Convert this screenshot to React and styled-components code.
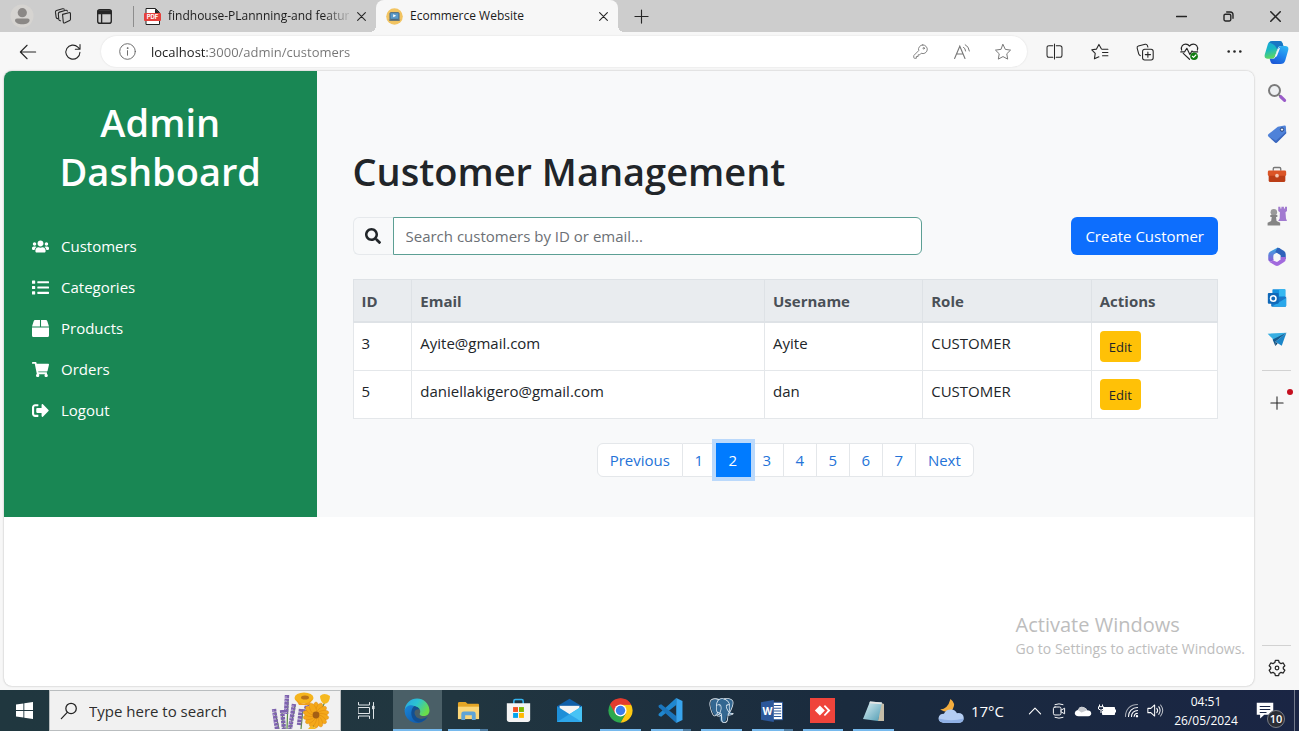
import React from 'react';
import styled, { createGlobalStyle, css } from 'styled-components';
import { FaUsers, FaList, FaBox, FaShoppingCart, FaSignOutAlt, FaSearch } from 'react-icons/fa';
import { SiPostgresql } from 'react-icons/si';

const GlobalStyle = createGlobalStyle`
  *, *::before, *::after { box-sizing: border-box; }
  body {
    margin: 0;
    font-family: "Open Sans", "Noto Sans", sans-serif;
    font-size: 15px;
    color: #212529;
    background: #f7f7f7;
  }
  button, input { font: inherit; color: inherit; }
  button { padding: 0; border: 0; background: none; cursor: pointer; }
  svg { display: block; flex: none; }
`;

/* ---------- browser chrome ---------- */

const Desktop = styled.div`
  display: flex;
  flex-direction: column;
  min-height: 100vh;
`;

const TabStrip = styled.div`
  display: flex;
  height: 32px;
  background: #cdcdcd;
  color: #1b1b1b;
`;

const StripTools = styled.div`
  display: flex;
  align-items: center;
  width: 134px;
  padding-left: 10px;
  gap: 17px;
  border-right: 1px solid #8d8d8d;
  border-image: linear-gradient(transparent 7px, #8d8d8d 7px, #8d8d8d 26px, transparent 26px) 1;
`;

const IconButton = styled.button`
  display: grid;
  place-items: center;
  width: ${(p) => p.$w || 24}px;
  height: ${(p) => p.$h || 24}px;
  color: ${(p) => p.$color || '#262626'};
`;

const Tab = styled.div`
  position: relative;
  display: flex;
  align-items: center;
  width: 242px;
  padding: 0 10px;
  gap: 7px;
  font-size: 12px;
  border-radius: 8px 8px 0 0;
  ${(p) => p.$active && css`
    background: #f7f7f7;
    &::before, &::after {
      content: "";
      position: absolute;
      bottom: 0;
      width: 6px;
      height: 6px;
    }
    &::before { left: -6px; background: radial-gradient(circle at 0 0, transparent 6px, #f7f7f7 6px); }
    &::after { right: -6px; background: radial-gradient(circle at 100% 0, transparent 6px, #f7f7f7 6px); }
  `}
`;

const TabTitle = styled.button`
  flex: 1;
  min-width: 0;
  white-space: nowrap;
  text-align: left;
  line-height: 20px;
  ${(p) => p.$fade && css`
    color: transparent;
    background: linear-gradient(90deg, #1b1b1b 155px, #b4b4b4 100%);
    background-clip: text;
  `}
`;

const WindowControls = styled.div`
  display: flex;
  margin-left: auto;
`;

const Toolbar = styled.div`
  display: flex;
  align-items: center;
  height: 39px;
  padding: 0 3px 0 5px;
`;

const AddressBar = styled.div`
  display: flex;
  flex: 1;
  align-items: center;
  height: 31px;
  margin: 0 5px 0 6px;
  padding: 0 4px 0 16px;
  border-radius: 16px;
  background: #fff;
  box-shadow: 0 0 2px rgba(0, 0, 0, 0.12);
`;

const AddressInput = styled.input`
  flex: 1;
  min-width: 0;
  height: 24px;
  margin-left: 14px;
  padding: 0;
  border: 0;
  outline: 0;
  font-size: 13px;
  color: transparent;
  background: linear-gradient(90deg, #1b1b1b 56px, #747474 56px);
  background-clip: text;
`;

const Body = styled.div`
  display: flex;
  flex: 1;
`;

const PageFrame = styled.main`
  position: relative;
  flex: 1;
  min-width: 0;
  margin: 0 0 4px 4px;
  overflow: hidden;
  border-radius: 8px;
  background: #fff;
  box-shadow: 0 0 2px rgba(0, 0, 0, 0.3);
`;

const Rail = styled.aside`
  display: flex;
  flex-direction: column;
  align-items: center;
  width: 45px;
  padding: 1px 0 2px;
`;

const RailLine = styled.hr`
  width: 29px;
  height: 1px;
  margin: ${(p) => (p.$end ? 'auto 0 1px' : '11px 0 11px')};
  border: 0;
  background: #d2d2d2;
`;

const AddApp = styled.div`
  position: relative;
  &::after {
    content: "";
    position: absolute;
    top: 7px;
    right: 6px;
    width: 6px;
    height: 6px;
    border-radius: 50%;
    background: #c50f1f;
  }
`;

/* ---------- admin page ---------- */

const Admin = styled.div`
  display: grid;
  grid-template-columns: 1fr 3fr;
`;

const Sidebar = styled.nav`
  padding: 27px 28px 40px;
  background: #198754;
  color: #fff;
`;

const Brand = styled.h2`
  margin: 0 0 29px;
  font-size: 38px;
  font-weight: 600;
  line-height: 49px;
  text-align: center;
`;

const NavList = styled.ul`
  margin: 0;
  padding: 0;
  list-style: none;
`;

const NavLink = styled.a`
  display: flex;
  align-items: center;
  gap: 12px;
  height: 41px;
  color: inherit;
  line-height: 24px;
  text-decoration: none;
  svg { margin-top: 2px; }
`;

const Content = styled.section`
  min-width: 0;
  padding: 76px 36px 40px;
  background: #f8f9fa;
`;

const Title = styled.h1`
  margin: 0 0 21px;
  font-size: 38px;
  font-weight: 600;
  line-height: 49px;
`;

const Actions = styled.div`
  display: grid;
  grid-template-columns: repeat(3, 1fr);
  column-gap: 23px;
  margin-bottom: 24px;
`;

const SearchGroup = styled.label`
  display: flex;
  grid-column: span 2;
  height: 38px;
`;

const SearchIcon = styled.span`
  display: grid;
  place-items: center;
  width: 40px;
  border: 1px solid #e6e9ec;
  border-right: 0;
  border-radius: 6px 0 0 6px;
`;

const SearchInput = styled.input`
  flex: 1;
  min-width: 0;
  padding: 0 12px;
  border: 1px solid #5c9f94;
  border-radius: 0 6px 6px 0;
  outline: 0;
  background: #fff;
  &::placeholder { color: #6c7075; opacity: 1; }
`;

const CreateButton = styled.button`
  justify-self: end;
  height: 38px;
  padding: 0 14px;
  border-radius: 6px;
  background: #0d6efd;
  color: #fff;
`;

const Table = styled.table`
  width: 100%;
  table-layout: fixed;
  border-collapse: collapse;
  background: #fff;
  line-height: 24px;
`;

const Th = styled.th`
  width: ${(p) => p.$w};
  padding: 9px 8px 8px;
  border: 1px solid #dee2e6;
  border-bottom: 2px solid #dee2e6;
  background: #e9ecef;
  color: #495057;
  font-weight: 700;
  text-align: left;
`;

const Td = styled.td`
  padding: 8px;
  border: 1px solid #e4e7ea;
  vertical-align: top;
`;

const EditButton = styled.button`
  display: block;
  height: 31px;
  padding: 0 9px;
  border-radius: 4px;
  background: #ffc107;
  color: #212529;
  font-size: 13px;
`;

const Pages = styled.ul`
  display: flex;
  justify-content: center;
  margin: 24px 0 0;
  padding: 0;
  list-style: none;
`;

const PageLink = styled.button`
  width: ${(p) => (p.$first || p.$last ? 'auto' : p.$active ? '35px' : '33px')};
  height: 34px;
  padding: 0 ${(p) => (p.$first || p.$last ? 12 : 0)}px;
  border: 1px solid #e4e7ea;
  border-left-width: ${(p) => (p.$first ? 1 : 0)}px;
  border-radius: ${(p) => (p.$first ? '6px 0 0 6px' : p.$last ? '0 6px 6px 0' : '0')};
  background: #fff;
  color: #2473d8;
  ${(p) => p.$active && css`
    position: relative;
    border-color: #007bff;
    background: #007bff;
    color: #fff;
    box-shadow: 0 0 0 4px #bbd9fb;
  `}
`;

const Watermark = styled.div`
  position: absolute;
  right: 9px;
  bottom: 26px;
  color: #bdbdbd;
  font-size: 14px;
  line-height: 22px;
  strong {
    display: block;
    font-size: 20px;
    font-weight: 400;
    line-height: 26px;
  }
`;

/* ---------- taskbar ---------- */

const Taskbar = styled.footer`
  display: flex;
  height: 41px;
  background: linear-gradient(90deg, #20373f, #213640 35%, #1a2b3e 65%, #1a2544);
  color: #fff;
`;

const TaskSearch = styled.label`
  display: flex;
  align-items: center;
  width: 292px;
  padding-left: 10px;
  border: 1px solid #b9bdbf;
  background: #f1f1f1;
  color: #222;
  input {
    flex: 1;
    min-width: 0;
    margin-left: 11px;
    padding: 0;
    border: 0;
    outline: 0;
    background: none;
  }
  input::placeholder { color: #2e2e2e; opacity: 1; }
`;

const AppList = styled.div`
  display: flex;
  width: 507px;
`;

const AppButton = styled.button`
  position: relative;
  display: grid;
  flex: 1;
  place-items: center;
  ${(p) => p.$active && css`background: linear-gradient(90deg, transparent 1px, #4a5f67 1px, #4a5f67 50px, transparent 50px);`}
  ${(p) => p.$running && css`
    &::after {
      content: "";
      position: absolute;
      bottom: 0;
      left: ${p.$active ? 1 : 5}px;
      right: ${p.$active ? 1 : 5}px;
      height: 2px;
      background: ${p.$many ? 'linear-gradient(90deg, #76b9ed 32px, #4d7ba0 32px)' : '#76b9ed'};
    }
  `}
`;

const Tray = styled.div`
  display: flex;
  align-items: center;
  margin-left: auto;
`;

const Weather = styled.button`
  display: flex;
  align-items: center;
  gap: 7px;
  margin-right: 19px;
`;

const Clock = styled.time`
  width: 76px;
  margin-left: 1px;
  font-size: 12px;
  line-height: 19px;
  text-align: center;
`;

const Notifications = styled.button`
  position: relative;
  width: 30px;
  height: 30px;
  margin: 0 8px 0 12px;
  span {
    position: absolute;
    right: 1px;
    bottom: -2px;
    width: 18px;
    height: 18px;
    border: 1px solid #7b7f88;
    border-radius: 50%;
    background: #2b2d35;
    font-size: 11px;
    font-weight: 600;
    line-height: 16px;
    text-align: center;
  }
`;

const DesktopEdge = styled.div`
  align-self: stretch;
  width: 5px;
  border-left: 1px solid #72798b;
`;

/* ---------- drawings ---------- */

const Line = ({ size = 18, box = 20, sw = 1.2, children }) => (
  <svg width={size} height={size} viewBox={`0 0 ${box} ${box}`} fill="none" stroke="currentColor"
    strokeWidth={sw} strokeLinecap="round" strokeLinejoin="round" aria-hidden="true">{children}</svg>
);
const Art = ({ size = 20, box = 24, children }) => (
  <svg width={size} height={size} viewBox={`0 0 ${box} ${box}`} aria-hidden="true">{children}</svg>
);

const Profile = () => (
  <Art size={24}>
    <circle cx="12" cy="12" r="11.5" fill="#d6d4d1" />
    <circle cx="12.3" cy="8.7" r="4.6" fill="#8b8886" />
    <path d="M5 16.2Q5 14.4 7 14.4H17.6Q19.6 14.4 19.6 16.2C19.6 18.6 16.4 20.3 12.3 20.3S5 18.6 5 16.2Z" fill="#8b8886" />
  </Art>
);
const Workspaces = () => (
  <Line size={18}>
    <path d="M9.5 8.2l7-1.9q1.7-.4 1.8 1.2v6.1q0 1-.9 1.4l-5.2 2.6q-1.700.8-1.9-1L9.500 8.2z" />
    <path d="M7.3 15.3q-1.7.1-2-1.4L4.8 7.5q0-1.4 1.3-1.8l7-2q1.4-.3 1.8.9" />
    <path d="M4.4 12.9q-1.8.1-2-1.3L1.6 5.7Q1.5 4.3 2.8 3.9L9.5 2q1.5-.3 1.9.6" />
  </Line>
);
const TabActions = () => (
  <Line size={17} sw={1.6}>
    <rect x="2" y="2" width="16" height="16" rx="2.5" /><path d="M2.5 3.5H17.5V6.5H2.5Z" fill="currentColor" /><path d="M6.6 7v10.5" />
  </Line>
);
const PdfIcon = () => (
  <Art size={17} box={17}>
    <path d="M2 .5h9.5L15.5 4.5V16.5H2Z" fill="#fff" stroke="#222" strokeWidth="1" /><path d="M11 .5V5h4.5z" fill="#222" />
    <rect x="0" y="5" width="17" height="8" rx="1" fill="#e5403b" />
    <text x="8.5" y="11.4" fontFamily="Inter, sans-serif" fontSize="6" fontWeight="700" fill="#fff" textAnchor="middle">PDF</text>
  </Art>
);
const Favicon = () => (
  <Art size={17} box={17}>
    <circle cx="8.5" cy="8.5" r="8.3" fill="#f2c462" /><rect x="4" y="4.7" width="9" height="6.6" rx=".6" fill="#5b9bc9" stroke="#3f6586" />
    <path d="M7.2 6.2l3 1.5-3 1.5z" fill="#fff" /><path d="M2.7 11.6h11.6l-.8 1.2h-10z" fill="#42617c" />
  </Art>
);
const Cross = ({ size = 9, sw = 1.2 }) => <Line size={size} box={10} sw={sw}><path d="M.7.7l8.6 8.6M9.3.7L.7 9.3" /></Line>;
const Plus = ({ size = 15 }) => <Line size={size} box={16} sw={1.2}><path d="M8 1v14M1 8h14" /></Line>;
const Minimise = () => <Line size={11} box={10} sw={1.3}><path d="M.5 5h9" /></Line>;
const Restore = () => <Line size={11} box={11} sw={1.4}><rect x="1" y="3.2" width="6.8" height="6.8" rx="1.4" /><path d="M3.7 1H7.2Q10 1 10 3.8V7.3" /></Line>;
const Back = () => <Line size={18}><path d="M18.5 10H1.7M9 2.5L1.5 10 9 17.5" /></Line>;
const Reload = () => <Line size={18}><path d="M17.7 10.2A7.8 7.8 0 1 1 15.4 4.6L17.6 6.8M17.8 1.8V7h-5.2" /></Line>;
const Info = () => <Line size={17} sw={1.1}><circle cx="10" cy="10" r="9.2" /><path d="M10 9v5.4" /><circle cx="10" cy="6" r=".5" fill="currentColor" /></Line>;
const Key = () => (
  <Line size={15} sw={1.2}>
    <path d="M13 1.2A5.8 5.8 0 0 0 7.6 8.8L1.4 15Q1 15.5 1 16v2Q1 19 2 19H4.5V16.7H6.8V14.4H9l1.9-2.1A5.8 5.8 0 1 0 13 1.2Z" /><circle cx="14.3" cy="5.7" r="1" />
  </Line>
);
const ReadAloud = () => (
  <svg width="18" height="18" viewBox="0 0 18 18" fill="none" stroke="currentColor" strokeLinecap="round" aria-hidden="true">
    <path d="M1.6 15.5L6.8 3.2 12 15.5M3.6 11H10" strokeWidth="1.1" /><path d="M10.5 4.2Q12.4 5.5 12.6 8M12.2 1.7Q16 3.6 16.4 8" strokeWidth="1" />
  </svg>
);
const starPath = 'M10 1.7l2.6 5.4 5.8.8-4.2 4.1 1 5.9L10 15.1l-5.2 2.8 1-5.9L1.6 7.9l5.8-.8z';
const Star = () => <Line size={18} sw={1.1}><path d={starPath} /></Line>;
const Split = () => <Line size={17}><path d="M8 3.2H3.6Q1.2 3.2 1.2 5.6V14.4Q1.2 16.8 3.6 16.8H8M12 3.2H16.4Q18.8 3.2 18.8 5.6V14.4Q18.8 16.8 16.4 16.8H12M10 1.2V18.8" /></Line>;
const Favourites = () => <Line size={18}><path d="M12.6 7H18.8M12.8 10.6H18.8M12.8 14.2H18.8M11.6 6.6L8.8 1.6 6.1 6.8.9 7.6 4.7 11.5 3.8 17.6 8.8 15.4" /></Line>;
const Collections = () => (
  <Line size={18}>
    <rect x="7.3" y="7" width="11.8" height="11.8" rx="2.4" /><path d="M13.2 10v5.8M10.3 12.9h5.8" />
    <path d="M4.8 14Q3.4 13.7 3 12.2L1.3 5.6Q.9 3.9 2.6 3.4L10.2 1.4Q12 1 12.6 2.6L13.2 4.5" />
  </Line>
);
const Health = () => (
  <Line size={19}>
    <path d="M1.7 8.6C.6 4.6 3.3 2.2 6 2.2Q8.6 2.2 10 4.3 11.4 2.2 14 2.2C16.7 2.2 19.4 4.6 18.3 8.6M3.4 12L10 18.2" />
    <path d="M.8 10.4H4.8L7.2 6.6 10.4 13.2 12.6 9.4 13.8 10.4H18.6" />
    <circle cx="14.8" cy="15" r="4" fill="#107c10" stroke="none" /><path d="M13 15l1.3 1.2 2.4-2.5" stroke="#fff" />
  </Line>
);
const Dots = () => <Art size={15} box={15}><g fill="#262626"><circle cx="1.7" cy="7.5" r="1.3" /><circle cx="7.5" cy="7.5" r="1.3" /><circle cx="13.3" cy="7.5" r="1.3" /></g></Art>;
const Copilot = () => (
  <Art size={25}>
    <defs>
      <linearGradient id="cpA" x1="0" y1="0" x2=".3" y2="1"><stop stopColor="#1ba5df" /><stop offset=".5" stopColor="#19b7c4" /><stop offset="1" stopColor="#62d95c" /></linearGradient>
      <linearGradient id="cpB" x1=".8" y1="0" x2=".3" y2="1"><stop stopColor="#2fb5f3" /><stop offset=".5" stopColor="#1f86ee" /><stop offset="1" stopColor="#1c58d6" /></linearGradient>
    </defs>
    <path d="M8.2 1H15.3Q17 1 17.7 2.8L18.6 5.7H15.6Q13.8 5.7 13.2 7.6L10.4 16Q9.7 18 7.6 18H3.6Q0 18 .7 14.2L3.6 4.3Q4.6 1 8.2 1Z" fill="url(#cpA)" />
    <path d="M8.2 1H15.3Q17 1 17.7 2.8L18.6 5.7H15.6Q13.8 5.7 13.2 7.6L12.6 9.3Q11.5 4.4 5 2.3 6.3 1 8.2 1Z" fill="#1976c4" />
    <path d="M15.8 23H8.7Q7 23 6.4 21.2L5.4 18H8.4Q10.2 18 10.8 16.2L13.6 7.8Q14.3 5.7 16.4 5.7H20.4Q24 5.7 23.3 9.6L20.4 19.6Q19.4 23 15.8 23Z" fill="url(#cpB)" />
    <path d="M13.4 8.300L15.500 7.500 12.300 15.500 10.300 16.800Z" fill="#f7f7f7" />
  </Art>
);

const RailSearch = () => <Art><path d="M14.5 14.5l2.5 2.3" stroke="#6c6c6c" strokeWidth="2.5" /><circle cx="9" cy="9" r="6.6" fill="#eef0f2" stroke="#7b7b7b" strokeWidth="2.4" /><path d="M16.5 16.5l4.6 4.3" stroke="#9a5cc9" strokeWidth="3.8" strokeLinecap="round" /></Art>;
const RailTag = () => <Art><path d="M13 3.2L21 1.8Q22.6 1.7 22.7 3.2L23 11 12.2 21.8Q10.8 23 9.4 21.8L1.6 14.6Q.5 13.4 1.7 12.2Z" fill="#4f82d9" /><path d="M1.6 14.6L9.4 21.8Q10.8 23 12.2 21.8L23 11V9L10.7 20Z" fill="#3c67bd" /><circle cx="18" cy="6.7" r="2" fill="#e6f0ff" stroke="#233f77" strokeWidth="1.2" /></Art>;
const RailTools = () => <Art><path d="M7.5 7V4.5Q7.5 3 9 3h6q1.5 0 1.5 1.5V7" fill="none" stroke="#777" strokeWidth="1.6" /><rect x="1" y="6.7" width="22" height="6.5" rx="1.6" fill="#db5527" /><path d="M2 13H22V18.5Q22 20.5 20 20.5H4Q2 20.5 2 18.5Z" fill="#bb3e17" /><circle cx="12" cy="12.8" r="2.2" fill="#f3c9b5" /></Art>;
const RailGames = () => (
  <Art>
    <path d="M13.5 1H16V3H17.3V1H20.3V3H21.6V1H24V6L22.2 7.5 22.8 15 24 18H13.5L15.2 15 15.5 7.5 13.5 6Z" fill="#a27bd0" />
    <circle cx="8.2" cy="7.5" r="3.9" fill="#9a9a9a" /><path d="M4 10.8h8.4v2.3H10.8L11.5 18 15.8 20V23.5H.7V20L5 18 5.7 13.1H4Z" fill="#858585" />
  </Art>
);
const Rail365 = () => (
  <Art>
    <defs><linearGradient id="m3" x1="0" y1="0" x2="0" y2="1"><stop stopColor="#35a8e0" /><stop offset="1" stopColor="#8d5bd6" /></linearGradient></defs>
    <path d="M12.5 1L4 5.5Q1.5 7 1.5 10V15Q1.5 18 5 17.5L8 15.8V9L13 6 16 1.5Z" fill="url(#m3)" />
    <path d="M12.5 1Q14 .7 16 2L20.5 4.8Q22.5 6 22.5 9V14.5L16 14.5V9.5L10 6Z" fill="#2f62bb" />
    <path d="M22.5 12Q23 16.5 20.5 18L14 22.3Q12 23.3 10 22.3L4.5 19Q3 18 3 17.3 5 18 7.5 16.2L12 18 16.2 15V12Z" fill="#a26add" />
    <path d="M12 7.7l4.2 2.4v4.7L12 17.2l-4.2-2.4v-4.7z" fill="#f7f7f7" />
  </Art>
);
const RailOutlook = () => <Art><rect x="6.5" y="1.5" width="15.5" height="18" rx="1" fill="#1490df" /><path d="M14.5 1.5H22V10H14.5Z" fill="#35b8f1" /><path d="M5 11L23 10.5V21Q23 22.5 21.5 22.5H6.5Q5 22.5 5 21Z" fill="#1a78c8" /><path d="M6 22.3L23 12v9Q23 22.5 21.5 22.5z" fill="#29a7ea" /><rect x="1" y="6" width="13" height="13" rx="1.2" fill="#0f68b8" /><circle cx="7.5" cy="12.5" r="3.3" fill="none" stroke="#fff" strokeWidth="1.9" /></Art>;
const RailSend = () => <Art><path d="M.8 5.6L23.3 4.5 9 14.2Z" fill="#37aee2" /><path d="M23.3 4.5L17.7 20 10 15.4Z" fill="#1b86c9" /><path d="M6.7 12.5L23.3 4.5 10 15.4V20.5Z" fill="#145b90" /><path d="M10 15.4L12.8 17.3 10 20.5Z" fill="#0b426d" /></Art>;
const Gear = () => (
  <Line size={18} sw={1.4}>
    <path d="M8.2 1.5H11.8L12.4 3.9 14.5 5.1 16.9 4.4 18.7 7.5 17 9.2V10.8L18.7 12.5 16.9 15.6 14.5 14.9 12.4 16.1 11.8 18.5H8.2L7.6 16.1 5.5 14.9 3.1 15.6 1.3 12.5 3 10.8V9.2L1.3 7.5 3.1 4.4 5.5 5.1 7.6 3.9Z" /><circle cx="10" cy="10" r="2" />
  </Line>
);

const WindowsLogo = () => <Art size={17} box={17}><path d="M0 2.5L7.4 1.4V8H0ZM8.3 1.3L17 0V8H8.3ZM0 9H7.4V15.6L0 14.5ZM8.3 9H17V17L8.3 15.7Z" fill="#fff" /></Art>;
const SearchThin = () => <Line size={18} sw={1.4}><circle cx="12.3" cy="7.2" r="5.8" /><path d="M8.1 11.5L1.5 18.5" /></Line>;
const Flowers = () => (
  <svg width="70" height="37" viewBox="0 0 70 37" aria-hidden="true">
    <g stroke="#5b8a45" strokeWidth="1.2" fill="none"><path d="M5 20L9 37M18 8L17 37M25 14L20 37M33 17L31 37M12 21L14 37M56 8Q50 20 42 37" /></g>
    <g stroke="#7d63ad" strokeWidth="4.4" strokeDasharray="2.8 .7" fill="none">
      <path d="M4 17L7 37M17 3L16 22M24 12L20 37M31 17L29 33M12 18L14 37M38 11L35 20" />
    </g>
    <g stroke="#a58ccc" strokeWidth="1.6" strokeDasharray="2 2" fill="none"><path d="M3 18L5 34M16 4L15 22M23 13L20 33" /></g>
    <ellipse cx="34" cy="6" rx="9.5" ry="5.5" fill="#f5b51e" /><path d="M25 6Q34 17 43 6L39 13H29Z" fill="#f0a01a" /><ellipse cx="35" cy="5.500" rx="4" ry="2" fill="#b8731a" />
    <path d="M50 4Q54 0 60 4Q60 11 54 12Q50 9 50 4Z" fill="#f6b920" />
    <g fill="#f4a81a">{Array.from({ length: 14 }, (_, i) => <ellipse key={i} cx="46" cy="16" rx="2.9" ry="6" transform={`rotate(${i * 360 / 14} 46 23)`} stroke="#d9820f" strokeWidth=".4" />)}</g>
    <circle cx="46" cy="23" r="3.4" fill="#a45f14" /><path d="M38 37Q42 31 46 37Z" fill="#f6b920" />
  </svg>
);
const TaskView = () => <Line size={17} box={17} sw={1}><path d="M.5 .5V3H11.5V.5M.5 16.5V14H11.5V16.5M.5 5.5H11.5V11.5H.5ZM15.5 .5V16.5" /><path d="M15 4h1v3h-1z" fill="currentColor" /></Line>;
const EdgeLogo = () => (
  <Art size={26}>
    <defs>
      <linearGradient id="eg1" x1="0" y1="0" x2="1" y2=".5"><stop stopColor="#2aa3e2" /><stop offset=".5" stopColor="#2bc3d2" /><stop offset="1" stopColor="#6adc4a" /></linearGradient>
      <linearGradient id="eg2" x1="0" y1="0" x2="1" y2="1"><stop stopColor="#1b87d8" /><stop offset="1" stopColor="#0c4fa3" /></linearGradient>
    </defs>
    <path d="M.6 11A11.5 11.5 0 0 1 23.5 11C23.8 16 19 17.6 15.5 16.2 13.4 15.2 15.4 14 14.9 11.6 14 7.3 6.4 5.5.6 11Z" fill="url(#eg1)" />
    <path d="M.5 12C1 7.5 6 5.7 9.5 7.3 6.5 9.5 6.4 18.8 13.5 20.4 17 21.2 19.6 19.6 21.5 18A11.5 11.5 0 0 1 .5 12Z" fill="url(#eg2)" />
    <path d="M9.5 7.3Q13 8 14.5 10.3 9.4 10 9.7 14 10.4 18.6 15.5 19.3 19 19.4 21.7 17.4 18 23 13 22.3C5.5 20.5 5.3 10.8 9.5 7.3Z" fill="#124f91" />
  </Art>
);
const Explorer = () => <Art size={23}><path d="M1 4.5Q1 3 2.5 3H9L11 5H22Q23 5 23 6.5V20.5H1Z" fill="#e3a526" /><path d="M1 8H23V21H1Z" fill="#fbd779" /><path d="M4.5 22V15.5Q4.5 13 7 13H17Q19.5 13 19.5 15.5V22H15.5V17H8.5V22Z" fill="#5fa4d6" /></Art>;
const Store = () => <Art size={25}><path d="M7.5 6V3Q7.5 1.5 9 1.5H15Q16.5 1.5 16.5 3V6" fill="none" stroke="#35b4ef" strokeWidth="1.5" /><path d="M.8 5H23.2V20.5Q23.2 23 20.7 23H3.3Q.8 23 .8 20.5Z" fill="#f4f4f4" /><path d="M6.8 8.7H11.5V13.4H6.8Z" fill="#f25022" /><path d="M12.5 8.7H17.2V13.4H12.5Z" fill="#7fba00" /><path d="M6.8 14.4H11.5V19.1H6.8Z" fill="#00a4ef" /><path d="M12.5 14.4H17.2V19.1H12.5Z" fill="#ffb900" /></Art>;
const Mail = () => <Art size={25}><path d="M0 8L12 .8 24 8V12H0Z" fill="#0f5ea8" /><path d="M2.5 7.5H21.5V17H2.5Z" fill="#f4f4f4" /><path d="M0 8L24 23H0Z" fill="#1d8fd8" /><path d="M24 8L0 23H24Z" fill="#2ea7ea" /><path d="M24 8V23L12 15.500Z" fill="#47c3f5" /></Art>;
const Chrome = () => (
  <Art size={25}>
    <path d="M12 12L1.9 6.2A11.7 11.7 0 0 1 22.1 6.2Z" fill="#e33b2e" /><path d="M12 12L1.9 6.2A11.7 11.7 0 0 0 12 23.7L17 15Z" fill="#2da94f" />
    <path d="M12 6.2H22.1A11.7 11.7 0 0 1 12 23.7L17 15Z" fill="#fdc912" /><path d="M1.9 6.2L7 15 12 6.5H22.2Q19 .3 12 .3 5.5.3 1.9 6.2Z" fill="#e33b2e" />
    <circle cx="12" cy="12" r="5.8" fill="#fff" /><circle cx="12" cy="12" r="4.5" fill="#3b7ded" />
  </Art>
);
const Code = () => (
  <Art size={25}>
    <path d="M17.5 0V6.700L3 18 .8 17Q0 16 .8 15.200Z" fill="#1f87cf" />
    <path d="M17.5 24V17.300L3 6 .8 7Q0 8 .8 8.800Z" fill="#1b76bd" />
    <path d="M17.5 0L23.5 2.8V21.2L17.5 24Z" fill="#38a4ed" />
  </Art>
);
const ElephantStack = styled.span`
  display: grid;
  > * { grid-area: 1 / 1; }
`;
const Postgres = () => (
  <ElephantStack>
    <Art size={25}><path d="M1.5 5Q2 1 7 1.3 12-.5 16 1 22 0 23 4 23 8 20 13.5L22.5 14.5Q21 17 17 17 17 22 14 23.3 11 23.5 10.5 21L10 16 6 17Q2 13 1.5 5Z" fill="#336791" /></Art>
    <SiPostgresql size={25} color="#e3edf5" />
  </ElephantStack>
);
const Word = () => (
  <Art size={22}>
    <rect x="11" y="2.5" width="12.5" height="19" fill="#fff" stroke="#2b579a" /><path d="M14 6H22M14 9H22M14 12H22M14 15H22M14 18H22" stroke="#2b579a" strokeWidth="1.3" />
    <path d="M0 2.5L14 0V24L0 21.5Z" fill="#2b579a" /><text x="7" y="16.2" fontFamily="Inter, sans-serif" fontSize="11" fontWeight="700" fill="#fff" textAnchor="middle">W</text>
  </Art>
);
const AnyDesk = () => <Art size={25}><rect width="24" height="24" fill="#ef443b" /><path d="M9.5 7.2L14.3 12 9.5 16.8 4.7 12Z" fill="#fff" /><path d="M13.2 7.8L14.4 6.8 19.6 12 14.4 17.2 13.2 16.2 17 12Z" fill="#fff" /></Art>;
const Notepad = () => (
  <Art size={24}>
    <defs><linearGradient id="np" x1="0" y1="0" x2="1" y2="1"><stop stopColor="#e0f1f5" /><stop offset="1" stopColor="#4e9bb3" /></linearGradient></defs>
    <path d="M18 3.5L22 5V22L16 22Z" fill="#c5bda8" /><path d="M8 2.5L20 3.5 16 22 1 20Z" fill="url(#np)" /><path d="M8 2.5L20 3.5 19.6 5.2 7.3 4.2Z" fill="#e5e5e5" />
  </Art>
);
const WeatherArt = () => (
  <Art size={26}>
    <path d="M11.5 1Q17 5 13.5 10.5 9 15 2 10.5 9 10.5 11.5 1Z" fill="#f4ad3d" />
    <path d="M5.5 23Q.5 22.5.5 18.5 1 14.5 5.5 14.5 7 10.5 12 10.5 16 10.5 17.5 14 23.5 13.5 23.8 18.5 23.5 23 19 23Z" fill="#b4cdf2" /><path d="M5.5 23Q1 22.5.6 19 12 22 23.7 19 23 23 19 23Z" fill="#90b1e6" />
  </Art>
);
const Chevron = () => <Line size={14} sw={1.6}><path d="M2 14L10 6 18 14" /></Line>;
const MeetNow = () => <Line size={16} sw={1.2}><rect x="3" y="5" width="9.5" height="10" rx="2" /><path d="M12.5 9L17 6.5V13.5L12.5 11M5 2Q10 0 15 2M5 18Q10 20 15 18" /></Line>;
const Cloud = () => <Art size={18}><path d="M6 19Q1 18.5 1 14.5 1.5 11 5 10.5 8 5 13 7 17 8 17.5 11 22.5 11 23 15 23 18.5 19 19Z" fill="#fff" /><path d="M5 10.5Q8 5 13 7 16.5 8 17.5 11L10 14Z" fill="#c6c9ce" /></Art>;
const Battery = () => <svg width="18" height="14" viewBox="0 0 18 14" aria-hidden="true"><path d="M5.5 3.5H16.5V10.5H4.5V7" fill="#fff" stroke="#fff" /><path d="M16.5 5.5H18V8.5H16.5Z" fill="#fff" /><path d="M1.5.5V2.5M4.5.5V2.5M.5 2.7H5.5V5Q3 7.5.5 5ZM3 6.5V9" stroke="#fff" fill="#1a2843" /></svg>;
const Wifi = () => <Line size={15} sw={1.4}><path d="M2 18C2 8 9 2 18 2" opacity=".6" /><path d="M6 18C6 11 11 6 18 6M10 18C10 13.5 13.5 10 18 10M13.5 18Q14 14 18 13.7" /><circle cx="17.3" cy="17.5" r=".9" fill="currentColor" /></Line>;
const Volume = () => <Line size={17} sw={1.2}><path d="M1 7.5H4.5L9 3.5V16.5L4.5 12.5H1ZM11.5 7.5Q13.5 10 11.5 12.5M13.8 5.5Q17.2 10 13.8 14.5" /><path d="M16 3.5Q21 10 16 16.5" opacity=".7" /></Line>;
const Bubble = () => <Art size={18}><path d="M1 1H23V17H11L5.5 22V17H1Z" fill="#fff" /><path d="M5 6H19M5 10H19M5 14H14" stroke="#1a2544" strokeWidth="1.4" /></Art>;

/* ---------- data ---------- */

const navItems = [['Customers', FaUsers], ['Categories', FaList], ['Products', FaBox], ['Orders', FaShoppingCart], ['Logout', FaSignOutAlt]];
const columns = [['ID', '6.8%'], ['Email', '40.8%'], ['Username', '18.3%'], ['Role', '19.5%'], ['Actions', '14.6%']];
const customers = [
  { id: 3, email: 'Ayite@gmail.com', username: 'Ayite', role: 'CUSTOMER' },
  { id: 5, email: 'daniellakigero@gmail.com', username: 'dan', role: 'CUSTOMER' },
];
const pages = ['Previous', 1, 2, 3, 4, 5, 6, 7, 'Next'];
const toolbarIcons = [['Split screen', Split], ['Favourites', Favourites], ['Collections', Collections], ['Browser essentials', Health], ['Settings and more', Dots]];
const railIcons = [['Search', RailSearch], ['Shopping', RailTag], ['Tools', RailTools], ['Games', RailGames], ['Microsoft 365', Rail365], ['Outlook', RailOutlook], ['Drop', RailSend]];
const apps = [
  { name: 'Edge', icon: EdgeLogo, active: true, running: true }, { name: 'File Explorer', icon: Explorer, running: true, many: true },
  { name: 'Store', icon: Store }, { name: 'Mail', icon: Mail }, { name: 'Chrome', icon: Chrome, running: true },
  { name: 'Code', icon: Code, running: true, many: true }, { name: 'PostgreSQL', icon: Postgres, running: true },
  { name: 'Word', icon: Word, running: true, many: true }, { name: 'AnyDesk', icon: AnyDesk, running: true }, { name: 'Notepad', icon: Notepad, running: true },
];
const trayIcons = [['Show hidden icons', Chevron], ['Meet now', MeetNow], ['OneDrive', Cloud], ['Battery', Battery], ['Network', Wifi], ['Volume', Volume]];

export default function App() {
  return (
    <Desktop>
      <GlobalStyle />
      <TabStrip>
        <StripTools>
          <IconButton aria-label="Profile"><Profile /></IconButton>
          <IconButton aria-label="Workspaces"><Workspaces /></IconButton>
          <IconButton aria-label="Tab actions"><TabActions /></IconButton>
        </StripTools>
        <Tab>
          <PdfIcon />
          <TabTitle $fade>findhouse-PLannning-and featur</TabTitle>
          <IconButton $w={10} aria-label="Close tab"><Cross /></IconButton>
        </Tab>
        <Tab $active>
          <Favicon />
          <TabTitle>Ecommerce Website</TabTitle>
          <IconButton $w={10} aria-label="Close tab"><Cross /></IconButton>
        </Tab>
        <IconButton $w={46} $h={32} aria-label="New tab"><Plus /></IconButton>
        <WindowControls>
          <IconButton $w={47} $h={32} aria-label="Minimise"><Minimise /></IconButton>
          <IconButton $w={47} $h={32} aria-label="Restore"><Restore /></IconButton>
          <IconButton $w={47} $h={32} aria-label="Close"><Cross size={11} sw={1.4} /></IconButton>
        </WindowControls>
      </TabStrip>

      <Toolbar>
        <IconButton $w={45} aria-label="Back"><Back /></IconButton>
        <IconButton $w={45} aria-label="Reload"><Reload /></IconButton>
        <AddressBar>
          <IconButton $w={20} $color="#666" aria-label="Site information"><Info /></IconButton>
          <AddressInput aria-label="Address" defaultValue="localhost:3000/admin/customers" />
          <IconButton $w={41} $color="#777" aria-label="Passwords"><Key /></IconButton>
          <IconButton $w={41} $color="#777" aria-label="Read aloud"><ReadAloud /></IconButton>
          <IconButton $w={41} $color="#777" aria-label="Add to favourites"><Star /></IconButton>
        </AddressBar>
        {toolbarIcons.map(([name, Icon]) => <IconButton key={name} $w={45} aria-label={name}><Icon /></IconButton>)}
        <IconButton $w={39} aria-label="Copilot"><Copilot /></IconButton>
      </Toolbar>

      <Body>
        <PageFrame>
          <Admin>
            <Sidebar>
              <Brand>Admin Dashboard</Brand>
              <NavList>
                {navItems.map(([label, Icon]) => (
                  <li key={label}><NavLink href={`#${label.toLowerCase()}`}><Icon size={17} />{label}</NavLink></li>
                ))}
              </NavList>
            </Sidebar>
            <Content>
              <Title>Customer Management</Title>
              <Actions>
                <SearchGroup>
                  <SearchIcon><FaSearch size={16} /></SearchIcon>
                  <SearchInput aria-label="Search customers" placeholder="Search customers by ID or email..." />
                </SearchGroup>
                <CreateButton>Create Customer</CreateButton>
              </Actions>
              <Table>
                <thead>
                  <tr>{columns.map(([name, w]) => <Th key={name} $w={w}>{name}</Th>)}</tr>
                </thead>
                <tbody>
                  {customers.map((c) => (
                    <tr key={c.id}>
                      <Td>{c.id}</Td>
                      <Td>{c.email}</Td>
                      <Td>{c.username}</Td>
                      <Td>{c.role}</Td>
                      <Td><EditButton>Edit</EditButton></Td>
                    </tr>
                  ))}
                </tbody>
              </Table>
              <Pages>
                {pages.map((p) => (
                  <li key={p}><PageLink $first={p === 'Previous'} $last={p === 'Next'} $active={p === 2}>{p}</PageLink></li>
                ))}
              </Pages>
            </Content>
          </Admin>
          <Watermark><strong>Activate Windows</strong>Go to Settings to activate Windows.</Watermark>
        </PageFrame>
        <Rail>
          {railIcons.map(([name, Icon]) => <IconButton key={name} $w={45} $h={41} aria-label={name}><Icon /></IconButton>)}
          <RailLine />
          <AddApp><IconButton $w={45} $h={41} aria-label="Add app"><Plus size={14} /></IconButton></AddApp>
          <RailLine $end />
          <IconButton $w={45} $h={41} aria-label="Settings"><Gear /></IconButton>
        </Rail>
      </Body>

      <Taskbar>
        <IconButton $w={49} $h={41} aria-label="Start"><WindowsLogo /></IconButton>
        <TaskSearch>
          <SearchThin />
          <input aria-label="Type here to search" placeholder="Type here to search" />
          <Flowers />
        </TaskSearch>
        <IconButton $w={51} $h={41} $color="#dfe5e8" aria-label="Task view"><TaskView /></IconButton>
        <AppList>
          {apps.map(({ name, icon: Icon, active, running, many }) => (
            <AppButton key={name} aria-label={name} $active={active} $running={running} $many={many}><Icon /></AppButton>
          ))}
        </AppList>
        <Tray>
          <Weather><WeatherArt />17°C</Weather>
          {trayIcons.map(([name, Icon]) => <IconButton key={name} $color="#fff" aria-label={name}><Icon /></IconButton>)}
          <Clock>04:51<br />26/05/2024</Clock>
          <Notifications aria-label="Notifications"><Bubble /><span>10</span></Notifications>
          <DesktopEdge />
        </Tray>
      </Taskbar>
    </Desktop>
  );
}
